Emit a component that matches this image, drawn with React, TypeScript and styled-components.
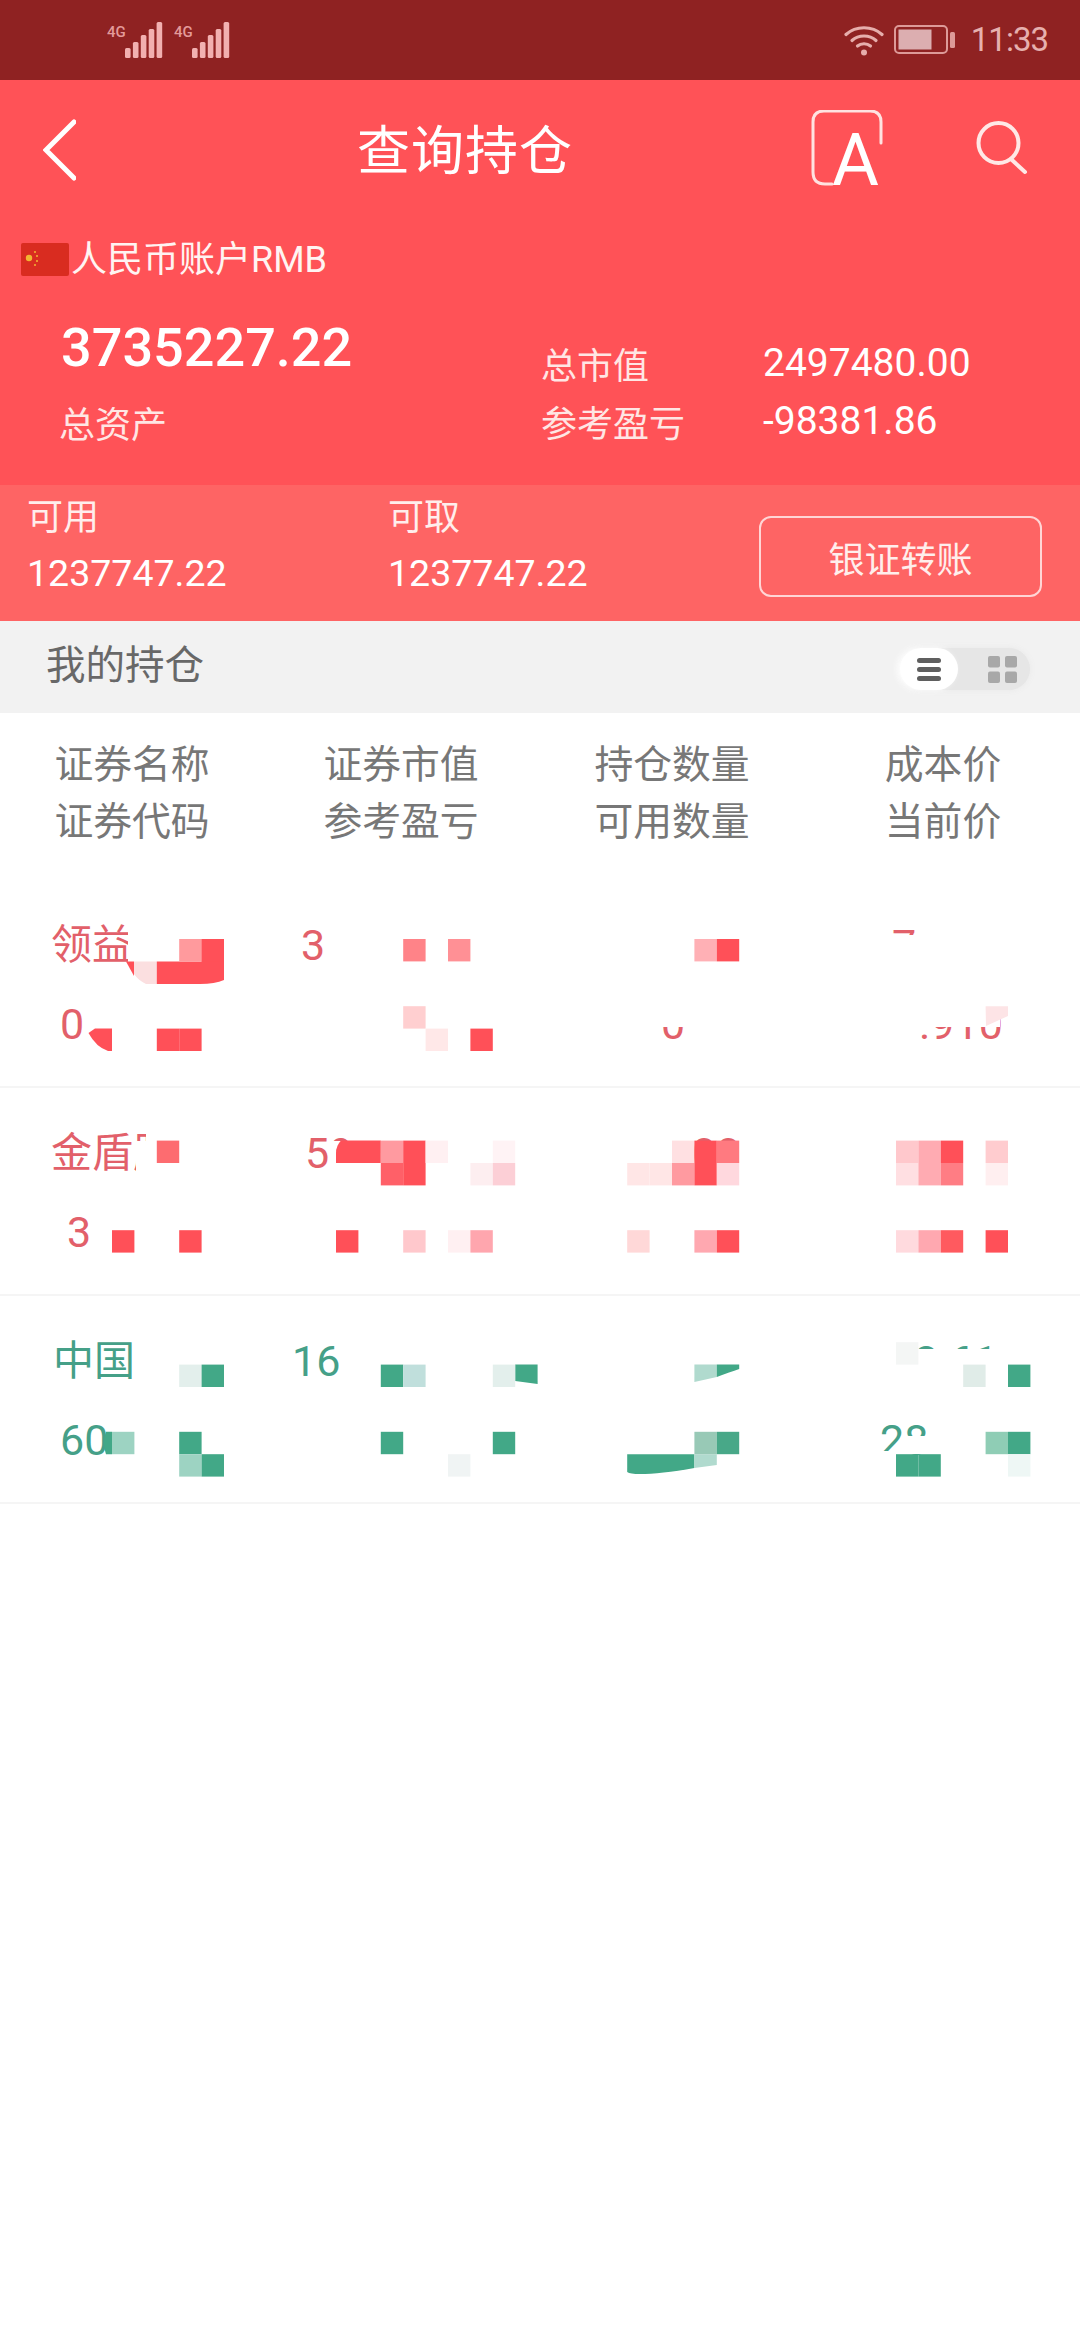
import React from 'react';
import styled, { createGlobalStyle } from 'styled-components';

const RED = '#ff5058';
const GREEN = '#42a887';

const GlobalStyle = createGlobalStyle`
  html, body {
    margin: 0;
    padding: 0;
    background: #fff;
    font-family: Roboto, "Noto Sans CJK SC", sans-serif;
  }
`;

const Page = styled.div`
  width: 1080px;
  height: 2340px;
  overflow: hidden;
  background: #fff;
`;

const StatusBar = styled.div`
  display: flex;
  align-items: center;
  height: 80px;
  padding: 0 32px 0 107px;
  box-sizing: border-box;
  background: #8f2222;
`;

const Signal = styled.div`
  display: flex;
  margin-right: 10px;
`;

const SignalTag = styled.span`
  width: 18px;
  font-size: 15px;
  line-height: 20px;
  font-weight: 500;
  white-space: nowrap;
  color: #e39a9a;
`;

const StatusRight = styled.div`
  display: flex;
  align-items: center;
  gap: 10px;
  margin-left: auto;
`;

const Clock = styled.span`
  margin-left: 5px;
  font-size: 33px;
  line-height: 40px;
  letter-spacing: -1px;
  color: #e6b0ae;
`;

const Hero = styled.div`
  background: #ff5257;
  color: #fff;
  height: 405px;
`;

const Nav = styled.div`
  display: flex;
  align-items: center;
  height: 140px;
  padding: 0 50px 0 43px;
`;

const Title = styled.h1`
  flex-shrink: 0;
  margin: 4px 0 0 281px;
  font-size: 53px;
  font-weight: 400;
  line-height: 66px;
  letter-spacing: 1px;
  white-space: nowrap;
  color: #fff;
`;

const NavActions = styled.div`
  display: flex;
  margin-left: auto;
  gap: 86px;
`;

const AccountRow = styled.div`
  display: flex;
  align-items: center;
  gap: 2px;
  height: 78px;
  padding-left: 21px;
  font-size: 36px;
  color: #fff4f2;
`;

const AccountName = styled.span`
  margin-top: -6px;
`;

const Summary = styled.div`
  display: flex;
  padding-left: 61px;
`;

const TotalBlock = styled.div`
  width: 480px;
`;

const TotalAmount = styled.div`
  font-size: 54px;
  font-weight: 500;
  line-height: 100px;
`;

const TotalLabel = styled.div`
  margin-left: -2px;
  font-size: 36px;
  line-height: 56px;
  color: #ffe6e4;
`;

const Figures = styled.div`
  display: grid;
  grid-template-columns: 222px auto;
  grid-auto-rows: 58px;
  padding-top: 36px;
  align-items: center;
  font-size: 36px;
  color: #ffe6e4;
`;

const FigureValue = styled.span`
  font-size: 39px;
  color: #fff;
`;

const FundsBar = styled.div`
  display: flex;
  align-items: flex-start;
  height: 136px;
  padding: 6px 38px 0 27px;
  box-sizing: border-box;
  background: #fe6464;
  color: #fff;
`;

const FundCol = styled.div`
  width: 361px;
`;

const FundLine = styled.div<{ $label?: boolean }>`
  font-size: ${(props) => (props.$label ? 36 : 37.5)}px;
  line-height: 55px;
  color: ${(props) => (props.$label ? '#ffeeec' : '#fff')};
`;

const TransferButton = styled.button`
  width: 283px;
  height: 81px;
  margin: 25px 0 0 auto;
  padding: 0;
  background: none;
  border: 2px solid #ffd5d5;
  border-radius: 12px;
  font: inherit;
  font-size: 36px;
  color: #ffeeec;
`;

const SectionBar = styled.div`
  display: flex;
  align-items: center;
  justify-content: space-between;
  height: 92px;
  padding: 0 50px 0 46px;
  background: #f2f2f2;
`;

const SectionTitle = styled.span`
  font-size: 39.5px;
  line-height: 50px;
  margin-top: -3px;
  color: #686868;
`;

const ViewToggle = styled.div`
  display: flex;
  align-items: center;
  width: 130px;
  height: 42px;
  margin-top: 4px;
  border-radius: 21px;
  background: #e6e6e6;
  box-shadow: 0 0 6px #e8e8e8;
  filter: blur(0.6px);
`;

const ToggleKnob = styled.div`
  display: flex;
  align-items: center;
  justify-content: center;
  width: 58px;
  height: 42px;
  border-radius: 21px;
  background: #fff;
  box-shadow: -3px 0 6px #fff;
`;

const ToggleGrid = styled.div`
  display: flex;
  justify-content: center;
  flex: 1;
  padding-left: 16px;
`;

const TableHead = styled.div`
  display: grid;
  grid-template-columns: 264px 274px 268px 274px;
  grid-auto-rows: 57px;
  align-items: center;
  padding: 19px 0 34px;
  text-align: center;
  font-size: 38.8px;
  color: #777;
`;

const Rows = styled.div`
  position: relative;
  height: 624px;
`;

const Row = styled.div<{ $tone: 'up' | 'down' }>`
  display: grid;
  grid-template-columns: 264px 274px 266px 276px;
  grid-auto-rows: 50px;
  row-gap: 29px;
  height: 208px;
  padding-top: 40px;
  box-sizing: border-box;
  border-bottom: 2px solid #f5f5f5;
  color: ${(props) => (props.$tone === 'up' ? '#e2606a' : '#45a088')};
`;

const Value = styled.span<{ $offset: number; $digits: boolean }>`
  padding-left: ${(props) => props.$offset}px;
  font-size: ${(props) => (props.$digits ? 43 : 41)}px;
  line-height: 50px;
  white-space: nowrap;
`;

const MosaicSvg = styled.svg`
  position: absolute;
  top: 0;
  left: 0;
`;

type Fragment = [number, string] | null;

const rows: { tone: 'up' | 'down'; lines: Fragment[][] }[] = [
  {
    tone: 'up',
    lines: [
      [[51, '领益'], [37, '3'], null, [88, '7']],
      [[60, '0'], null, [123, '0'], [115, '.910']],
    ],
  },
  {
    tone: 'up',
    lines: [
      [[51, '金盾股'], [41, '59'], [154, '00'], null],
      [[67, '3'], null, null, null],
    ],
  },
  {
    tone: 'down',
    lines: [
      [[53, '中国'], [28, '16'], null, [110, '8.61']],
      [[60, '60'], null, null, [76, '28']],
    ],
  },
];

// mosaic blocks of the redacted figures: [column, row, colour], 22.4px grid
const blocks: [number, number, string][] = [
  [8, 0, '#ff9a9d'],
  [9, 0, RED],
  [18, 0, '#ff8388'],
  [20, 0, '#ff9095'],
  [31, 0, '#ffb0b5'],
  [32, 0, RED],
  [18, 3, '#ffcfd0'],
  [7, 4, RED],
  [8, 4, RED],
  [19, 4, '#ffe8e8'],
  [21, 4, RED],

  [7, 9, '#fd6c70'],
  [17, 9, '#ff9aa0'],
  [18, 9, RED],
  [19, 9, '#fff0f2'],
  [22, 9, '#fff3f5'],
  [30, 9, '#ffe0e2'],
  [31, 9, RED],
  [32, 9, '#ff7a80'],
  [40, 9, '#ffc8cc'],
  [41, 9, '#ffabb2'],
  [42, 9, RED],
  [44, 9, '#ffcccf'],
  [17, 10, '#ff6068'],
  [18, 10, RED],
  [21, 10, '#fdeef0'],
  [22, 10, '#fccfd6'],
  [28, 10, '#ffe6e6'],
  [29, 10, '#ffe6e6'],
  [30, 10, '#ff9aa0'],
  [31, 10, RED],
  [32, 10, '#ffd8de'],
  [40, 10, '#ffdfe2'],
  [41, 10, '#ffabb2'],
  [42, 10, '#ff7d84'],
  [44, 10, '#ffeff0'],
  [5, 13, RED],
  [8, 13, RED],
  [15, 13, RED],
  [18, 13, '#ffc8cc'],
  [20, 13, '#fff0f2'],
  [21, 13, '#ffa6ae'],
  [28, 13, '#ffd8d8'],
  [31, 13, '#ffa8b0'],
  [32, 13, RED],
  [40, 13, '#ffdade'],
  [41, 13, '#ffa8b0'],
  [42, 13, '#ff5a5f'],
  [44, 13, RED],

  [40, 18, '#f4f6f5'],
  [8, 19, '#e3efec'],
  [9, 19, GREEN],
  [17, 19, GREEN],
  [18, 19, '#c0dfdc'],
  [22, 19, '#e3efec'],
  [43, 19, '#e0ece8'],
  [45, 19, GREEN],
  [5, 22, '#9dd3c2'],
  [8, 22, GREEN],
  [17, 22, GREEN],
  [22, 22, GREEN],
  [31, 22, '#98c9b6'],
  [32, 22, '#48a888'],
  [44, 22, '#8fcdb5'],
  [45, 22, GREEN],
  [8, 23, '#9dd3c2'],
  [9, 23, GREEN],
  [20, 23, '#f0f4f4'],
  [40, 23, GREEN],
  [41, 23, GREEN],
  [45, 23, '#eef7f5'],
];

// white patches that hide the rest of a figure: [x, y, width, height]
const covers: [number, number, number, number][] = [
  [128, 920, 12, 42],
  [888, 935, 32, 30],
  [655, 1000, 35, 27],
  [915, 1000, 85, 27],
  [146, 1125, 34, 16],
  [136, 1141, 44, 34],
  [329, 1141, 23, 34],
  [908, 1349, 87, 32],
  [903, 1436, 37, 18],
  [875, 1451, 30, 9],
];

// blocks that the smearing in the picture has bent: [path, colour]
const smears: [string, string][] = [
  ['M126 961.4H134V976Z', RED],
  ['M134 961.4H156.8V984H146Q138 980 134 974Z', '#fbdfe0'],
  ['M156.8 961.4H201.6V939H224V980Q215 984 200 984H156.8Z', RED],
  ['M95 1028.6H112V1051H108Q96 1047 88.5 1033Z', RED],
  ['M985.6 1006.2H1008V1016L986 1026Z', '#fde4e6'],
  ['M341 1140.6H380.8V1163H336V1153Q336 1146 341 1140.6Z', RED],
  ['M112 1431.8V1454.2H106Q102 1443 106 1431.8Z', GREEN],
  ['M515.2 1364.6H537.6V1384L515.2 1381Z', GREEN],
  ['M694.4 1364.6H716.8V1377L694.4 1382Z', '#b0dace'],
  ['M716.8 1364.6H739.2V1369Q730 1372 716.8 1377Z', GREEN],
  ['M627.2 1454.2H694.4V1468Q660 1474 640 1474Q630 1474 627.2 1472Z', GREEN],
  ['M694.4 1454.2H716.8V1465L694.4 1468Z', '#b0dace'],
];

const Mosaic = () => (
  <MosaicSvg width="1080" height="624" viewBox="0 880 1080 624">
    {covers.map(([x, y, w, h]) => (
      <rect key={`${x}-${y}`} x={x} y={y} width={w} height={h} fill="#fff" />
    ))}
    {smears.map(([d, fill]) => (
      <path key={d} d={d} fill={fill} />
    ))}
    {blocks.map(([k, j, fill]) => (
      <rect
        key={`${k}-${j}`}
        x={k * 22.4}
        y={939 + j * 22.4}
        width="22.4"
        height="22.4"
        fill={fill}
      />
    ))}
  </MosaicSvg>
);

const SignalBars = () => (
  <svg width="39" height="36" viewBox="0 0 39 36">
    {[26, 20, 13, 7, 0].map((top, i) => (
      <rect
        key={top}
        x={i * 7.9}
        y={top}
        width="5.6"
        height={36 - top}
        rx="1.5"
        fill="#f2b0b0"
      />
    ))}
  </svg>
);

const WifiIcon = () => (
  <svg width="40" height="34" viewBox="0 0 40 34" fill="none" stroke="#e6aeac" strokeWidth="3.2" strokeLinecap="round">
    <path d="M2 11.5C12 2.5 28 2.5 38 11.5" />
    <path d="M8 17.5C14.5 11.5 25.5 11.5 32 17.5" />
    <path d="M13.5 23C17 20 23 20 26.5 23" />
    <circle cx="20" cy="29.5" r="3" fill="#e6aeac" stroke="none" />
  </svg>
);

const BatteryIcon = () => (
  <svg width="62" height="30" viewBox="0 0 62 30">
    <rect x="1" y="1" width="52" height="27" rx="4" fill="none" stroke="#dd9a98" strokeWidth="2" />
    <rect x="4.5" y="4.5" width="33" height="20" fill="#dcaeb0" />
    <rect x="56" y="7" width="5" height="16" rx="1.5" fill="#dd9a98" />
  </svg>
);

const BackIcon = () => (
  <svg width="33" height="62" viewBox="0 0 33 62" fill="none" stroke="#fff" strokeWidth="5" strokeLinecap="round">
    <path d="M31 3L3 31L31 59" />
  </svg>
);

const FontSizeIcon = () => (
  <svg width="74" height="80" viewBox="0 0 74 80" fill="none">
    <path
      d="M71 33V12Q71 1 60 1H14Q3 1 3 12V62Q3 74 15 74H22"
      stroke="#ffe2e0"
      strokeWidth="3"
      strokeLinecap="round"
    />
    <text x="22" y="75" fill="#fff" fontFamily="Roboto, sans-serif" fontSize="72" fontWeight="400">
      A
    </text>
  </svg>
);

const SearchIcon = () => (
  <svg width="60" height="80" viewBox="0 0 60 80" fill="none" stroke="#ffe8e6" strokeWidth="4" strokeLinecap="round">
    <circle cx="28.5" cy="33" r="20" />
    <path d="M42 50L55 62" />
  </svg>
);

const FlagIcon = () => (
  <svg width="48" height="33" viewBox="0 0 48 33">
    <rect width="48" height="33" rx="2" fill="#d92c20" />
    <circle cx="8" cy="15" r="3.2" fill="#f2b632" />
    <circle cx="14" cy="9" r="1" fill="#f2b632" />
    <circle cx="16" cy="13" r="1" fill="#f2b632" />
    <circle cx="16" cy="18" r="1" fill="#f2b632" />
    <circle cx="14" cy="22" r="1" fill="#f2b632" />
  </svg>
);

const ListIcon = () => (
  <svg width="24" height="28" viewBox="0 0 24 28" fill="#5f5f5f">
    <rect y="3" width="24" height="5" rx="2.5" />
    <rect y="12" width="24" height="5" rx="2.5" />
    <rect y="21" width="24" height="5" rx="2.5" />
  </svg>
);

const GridIcon = () => (
  <svg width="29" height="27" viewBox="0 0 29 27" fill="#a8a8a8">
    <rect width="12" height="11.5" rx="2" />
    <rect x="17" width="12" height="11.5" rx="2" />
    <rect y="15.5" width="12" height="11.5" rx="2" />
    <rect x="17" y="15.5" width="12" height="11.5" rx="2" />
  </svg>
);

export default function App() {
  return (
    <Page>
      <GlobalStyle />
      <StatusBar>
        <Signal>
          <SignalTag>4G</SignalTag>
          <SignalBars />
        </Signal>
        <Signal>
          <SignalTag>4G</SignalTag>
          <SignalBars />
        </Signal>
        <StatusRight>
          <WifiIcon />
          <BatteryIcon />
          <Clock>11:33</Clock>
        </StatusRight>
      </StatusBar>

      <Hero>
        <Nav>
          <BackIcon />
          <Title>查询持仓</Title>
          <NavActions>
            <FontSizeIcon />
            <SearchIcon />
          </NavActions>
        </Nav>
        <AccountRow>
          <FlagIcon />
          <AccountName>人民币账户RMB</AccountName>
        </AccountRow>
        <Summary>
          <TotalBlock>
            <TotalAmount>3735227.22</TotalAmount>
            <TotalLabel>总资产</TotalLabel>
          </TotalBlock>
          <Figures>
            <span>总市值</span>
            <FigureValue>2497480.00</FigureValue>
            <span>参考盈亏</span>
            <FigureValue>-98381.86</FigureValue>
          </Figures>
        </Summary>
      </Hero>

      <FundsBar>
        <FundCol>
          <FundLine $label>可用</FundLine>
          <FundLine>1237747.22</FundLine>
        </FundCol>
        <FundCol>
          <FundLine $label>可取</FundLine>
          <FundLine>1237747.22</FundLine>
        </FundCol>
        <TransferButton>银证转账</TransferButton>
      </FundsBar>

      <SectionBar>
        <SectionTitle>我的持仓</SectionTitle>
        <ViewToggle>
          <ToggleKnob>
            <ListIcon />
          </ToggleKnob>
          <ToggleGrid>
            <GridIcon />
          </ToggleGrid>
        </ViewToggle>
      </SectionBar>

      <TableHead>
        <span>证券名称</span>
        <span>证券市值</span>
        <span>持仓数量</span>
        <span>成本价</span>
        <span>证券代码</span>
        <span>参考盈亏</span>
        <span>可用数量</span>
        <span>当前价</span>
      </TableHead>

      <Rows>
        {rows.map((row, r) => (
          <Row key={r} $tone={row.tone}>
            {row.lines.flat().map((cell, c) =>
              cell ? (
                <Value key={c} $offset={cell[0]} $digits={/^[\d.]+$/.test(cell[1])}>
                  {cell[1]}
                </Value>
              ) : (
                <span key={c} />
              ),
            )}
          </Row>
        ))}
        <Mosaic />
      </Rows>
    </Page>
  );
}
